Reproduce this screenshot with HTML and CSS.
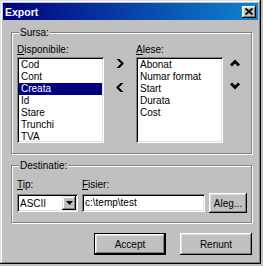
FILE: index.html
```html
<!DOCTYPE html>
<html lang="ro">
<head>
    <meta charset="UTF-8">
    <title>Export</title>
    <link rel="stylesheet" href="styles.css">
</head>
<body>
    <div class="window">
        <div class="titlebar">
            <span class="title">Export</span>
            <button class="close-btn" aria-label="Inchide">
                <svg width="8" height="7" viewBox="0 0 8 7"><path d="M0.5 0.5 L7.5 6.5 M7.5 0.5 L0.5 6.5" stroke="#000" stroke-width="1.8" fill="none"/></svg>
            </button>
        </div>

        <div class="content">
            <div class="group group-source">
                <div class="group-title">Sursa:</div>
                <div class="source-grid">
                    <div class="lbl col-left"><u>D</u>isponibile:</div>
                    <div class="lbl col-right"><u>A</u>lese:</div>

                    <ul class="listbox">
                        <li>Cod</li>
                        <li>Cont</li>
                        <li class="selected">Creata</li>
                        <li>Id</li>
                        <li>Stare</li>
                        <li>Trunchi</li>
                        <li>TVA</li>
                    </ul>

                    <div class="arrows">
                        <svg width="8" height="9" viewBox="0 0 8 9"><polygon points="0.5,0 3.5,0 8,4.5 3.5,9 0.5,9 5,4.5" fill="#000"/></svg>
                        <svg width="8" height="9" viewBox="0 0 8 9"><polygon points="7.5,0 4.5,0 0,4.5 4.5,9 7.5,9 3,4.5" fill="#000"/></svg>
                    </div>

                    <ul class="listbox">
                        <li>Abonat</li>
                        <li>Numar format</li>
                        <li>Start</li>
                        <li>Durata</li>
                        <li>Cost</li>
                    </ul>

                    <div class="arrows">
                        <svg width="10" height="8" viewBox="0 0 10 8"><polygon points="0,5.5 5,0.5 10,5.5 8,7.5 5,4.5 2,7.5" fill="#000"/></svg>
                        <svg width="10" height="8" viewBox="0 0 10 8"><polygon points="0,2.5 5,7.5 10,2.5 8,0.5 5,3.5 2,0.5" fill="#000"/></svg>
                    </div>
                </div>
            </div>

            <div class="group group-dest">
                <div class="group-title">Destinatie:</div>
                <div class="dest-grid">
                    <div class="lbl"><u>T</u>ip:</div>
                    <div class="lbl"><u>F</u>isier:</div>
                    <div></div>

                    <div class="combo">
                        <span class="combo-text">ASCII</span>
                        <span class="combo-btn">
                            <svg width="7" height="4" viewBox="0 0 7 4"><polygon points="0,0 7,0 3.5,4" fill="#000"/></svg>
                        </span>
                    </div>
                    <div class="field">c:\temp\test</div>
                    <button class="btn btn-small">Ale<u>g</u>...</button>
                </div>
            </div>

            <div class="actions">
                <button class="btn btn-default">Accept</button>
                <button class="btn">Renunt</button>
            </div>
        </div>
    </div>
</body>
</html>
```

FILE: styles.css
```css
body {
    margin: 0;
    padding: 0;
    background: #c0c0c0;
    font-family: 'Liberation Sans', Arial, sans-serif;
    font-size: 10px;
    color: #000;
}

.window {
    width: 261px;
    height: 264px;
    box-sizing: border-box;
    padding: 3px;
    background: #c0c0c0;
    box-shadow: inset -1px -1px #000, inset 1px 1px #dfdfdf, inset -2px -2px #808080, inset 2px 2px #fff;
}

.titlebar {
    height: 17px;
    display: flex;
    align-items: center;
    justify-content: space-between;
    padding: 0 2px 0 2px;
    background: linear-gradient(to right, #000080, #1084d0);
}

.title {
    color: #fff;
    font-weight: bold;
    font-size: 10.5px;
}

.close-btn {
    width: 14px;
    height: 12px;
    padding: 0;
    border: none;
    background: #c0c0c0;
    display: flex;
    align-items: center;
    justify-content: center;
    box-shadow: inset -1px -1px #000, inset 1px 1px #fff, inset -2px -2px #808080, inset 2px 2px #dfdfdf;
}

.content {
    padding-left: 8px;
}

.group {
    width: 241px;
    box-sizing: border-box;
    border: 1px solid #808080;
    box-shadow: inset 1px 1px #fff, 1px 1px #fff;
    padding: 0 0 0 5px;
}

.group-title {
    width: fit-content;
    margin: -6px 0 0 2px;
    padding: 0 1px;
    line-height: 12px;
    background: #c0c0c0;
}

.lbl {
    line-height: 12px;
}

.group-source {
    margin-top: 12px;
    padding-bottom: 10px;
}

.source-grid {
    margin-top: 5px;
    display: grid;
    grid-template-columns: 87px 32px 87px 24px;
    row-gap: 1px;
}

.col-left {
    grid-row: 1;
    grid-column: 1;
}

.col-right {
    grid-row: 1;
    grid-column: 3;
}

.source-grid .listbox,
.source-grid .arrows {
    grid-row: 2;
}

.listbox {
    margin: 0;
    padding: 2px;
    list-style: none;
    height: 86px;
    box-sizing: border-box;
    background: #fff;
    box-shadow: inset 1px 1px #808080, inset -1px -1px #fff, inset 2px 2px #000, inset -2px -2px #dfdfdf;
}

.listbox li {
    line-height: 12px;
    padding-left: 2px;
    white-space: nowrap;
}

.listbox li.selected {
    background: #000080;
    color: #fff;
}

.arrows {
    display: flex;
    flex-direction: column;
    align-items: center;
    padding-top: 2px;
    gap: 15px;
}

.group-dest {
    margin-top: 11px;
    padding-bottom: 9px;
}

.dest-grid {
    margin-top: 7px;
    display: grid;
    grid-template-columns: 61px 123px 38px;
    column-gap: 4px;
    row-gap: 2px;
    align-items: center;
}

.combo,
.field {
    height: 18px;
    box-sizing: border-box;
    background: #fff;
    box-shadow: inset 1px 1px #808080, inset -1px -1px #fff, inset 2px 2px #000, inset -2px -2px #dfdfdf;
}

.combo {
    display: flex;
    align-items: center;
    padding: 2px;
}

.combo-text {
    flex: 1;
    padding-left: 1px;
}

.combo-btn {
    width: 14px;
    height: 14px;
    display: flex;
    align-items: center;
    justify-content: center;
    background: #c0c0c0;
    box-shadow: inset -1px -1px #000, inset 1px 1px #dfdfdf, inset -2px -2px #808080, inset 2px 2px #fff;
}

.field {
    line-height: 18px;
    padding-left: 3px;
    white-space: nowrap;
}

.btn {
    font-family: inherit;
    font-size: 10px;
    color: #000;
    height: 22px;
    width: 72px;
    padding: 0;
    border: none;
    background: #c0c0c0;
    box-shadow: inset -1px -1px #000, inset 1px 1px #fff, inset -2px -2px #808080, inset 2px 2px #dfdfdf;
}

.btn-small {
    width: 38px;
    height: 20px;
}

.btn-default {
    box-shadow: inset 0 0 0 1px #000, inset -2px -2px #000, inset 2px 2px #fff, inset -3px -3px #808080, inset 3px 3px #dfdfdf;
}

.actions {
    width: 241px;
    margin-top: 10px;
    display: flex;
    justify-content: flex-end;
    gap: 14px;
}
```
